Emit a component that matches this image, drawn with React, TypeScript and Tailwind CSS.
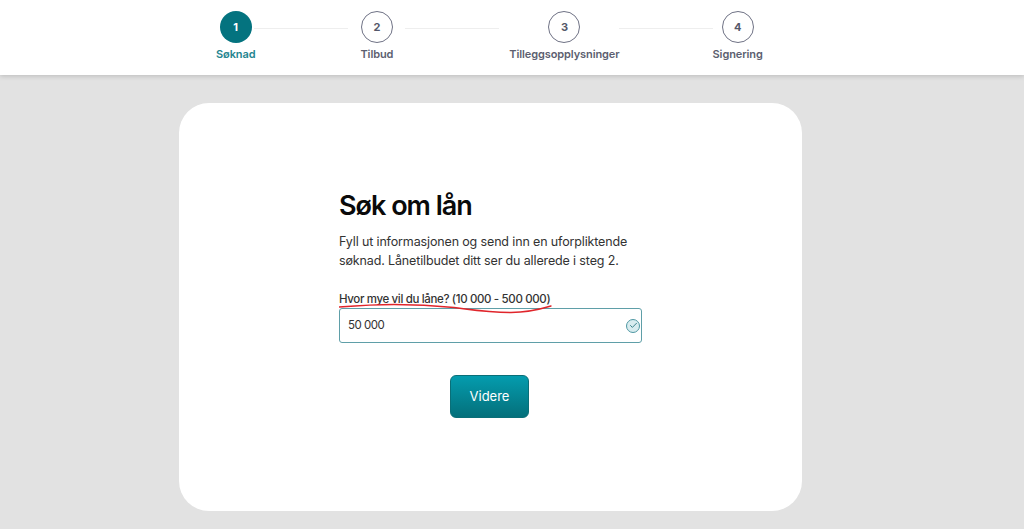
import { Check } from 'lucide-react'

const font = { sans: 'font-["Inter","Liberation_Sans",sans-serif]' }

interface StepProps {
  n: number
  label: string
  active?: boolean
}

function Step({ n, label, active }: StepProps) {
  return (
    <div className="flex flex-col items-center">
      <div
        className={`flex h-8 w-8 items-center justify-center rounded-full text-[11px] font-bold ${
          active ? 'bg-[#04737f] text-white' : 'border border-[#6f7285] bg-white text-[#55586a]'
        }`}
      >
        {n}
      </div>
      <span
        className={`mt-[3px] whitespace-nowrap text-[11px] leading-[16px] font-semibold tracking-[-0.1px] ${
          active ? 'text-[#25858f]' : 'text-[#5c5f70]'
        }`}
      >
        {label}
      </span>
    </div>
  )
}

function Line({ className }: { className: string }) {
  return <div className={`mt-[17px] h-px w-[94px] bg-[#eeeeee] ${className}`} />
}

export default function App() {
  return (
    <div className={`flex h-[529px] flex-col overflow-hidden bg-[#e2e2e2] ${font.sans}`}>
      {/* Stepper */}
      <header className="relative flex h-[75px] shrink-0 items-start bg-white pl-[216px] pt-[11px] shadow-[0_1px_5px_rgba(0,0,0,0.18)]">
        <Step n={1} label="Søknad" active />
        <Line className="-ml-px mr-[12px]" />
        <Step n={2} label="Tilbud" />
        <Line className="ml-[12px] mr-[10px]" />
        <Step n={3} label="Tilleggsopplysninger" />
        <Line className="-ml-px mr-0" />
        <Step n={4} label="Signering" />
      </header>

      {/* Card */}
      <main className="ml-[179px] mt-[28px] h-[408px] w-[623px] rounded-[30px] bg-white pl-[160px] pr-[160px] pt-[88px]">
        <h1 className="text-[27px] leading-[30px] font-semibold tracking-[-1px] text-[#0a0a0a]">Søk om lån</h1>
        <p className="mt-[11px] text-[12.5px] leading-[19px] tracking-[-0.14px] text-[#333333]">
          Fyll ut informasjonen og send inn en uforpliktende søknad. Lånetilbudet ditt ser du allerede i steg 2.
        </p>

        <div className="relative mt-[22px]">
          <label className="block text-[11.5px] leading-[14px] font-medium tracking-[-0.35px] text-[#333333]">
            Hvor mye vil du låne? (10 000 - 500 000)
          </label>
          {/* red hand-drawn underline */}
          <svg className="absolute left-0 top-[10px]" width="216" height="12" viewBox="0 0 216 12" fill="none">
            <path
              d="M0 5C20 3.5 35 2.5 55 2.5C80 2.5 95 3.5 115 5.5C135 8 150 10.5 172 10.5C190 10.5 202 7 212 4"
              stroke="#e0252b"
              strokeWidth="1.4"
              strokeLinecap="round"
            />
          </svg>
          <div className="mt-[2px] flex h-[35px] w-[303px] items-center justify-between rounded-[3px] border border-[#5f9fa8] pl-[8px] pr-[1px]">
            <span className="text-[11.5px] tracking-[-0.5px] text-[#333333]">50 000</span>
            <span className="flex h-[14px] w-[14px] items-center justify-center rounded-full border border-[#4f98a3] bg-[#d8ecef]">
              <Check className="h-[9px] w-[9px] text-[#1f6f7a]" strokeWidth={2.25} />
            </span>
          </div>
        </div>

        <div className="mt-[32px] flex w-[301px] justify-center">
          <button className="h-[43px] w-[79px] rounded-[6px] border border-[#0a6f78] bg-gradient-to-b from-[#049cae] to-[#04707b] pt-[1px] text-[13px] text-white">
            Videre
          </button>
        </div>
      </main>
    </div>
  )
}
